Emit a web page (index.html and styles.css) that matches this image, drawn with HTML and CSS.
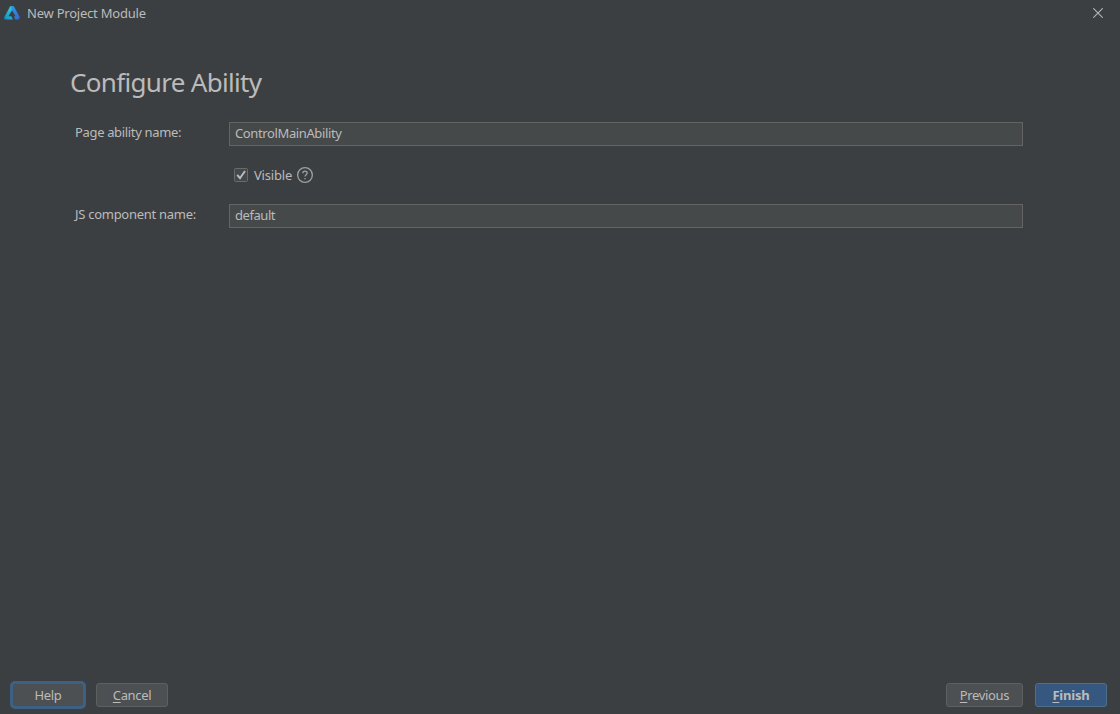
FILE: index.html
```html
<!DOCTYPE html>
<html lang="en">
<head>
<meta charset="utf-8">
<title>New Project Module</title>
<link rel="stylesheet" href="styles.css">
</head>
<body>
<div class="dialog">
  <header class="titlebar">
    <svg class="logo" width="16" height="14" viewBox="0 0 16 14">
      <defs>
        <linearGradient id="left" x1="0" y1="1" x2="1" y2="0"><stop offset="0" stop-color="#0c8dc0"/><stop offset="1" stop-color="#3fd0e4"/></linearGradient>
        <linearGradient id="right" x1="0" y1="0" x2="1" y2="1"><stop offset="0" stop-color="#2b9fe8"/><stop offset="1" stop-color="#3565cf"/></linearGradient>
      </defs>
      <path d="M6 .6Q6.4 0 7 0H8.4L8 4.2L4.4 10.2H7.2L8.8 13.4H1.6Q-.6 13.2.5 10.8Z" fill="url(#left)"/>
      <path d="M7 0H9Q9.6 0 10 .6L15.6 10.8Q16.4 13.2 14 13.4H11.2L10 10.2H11.6L7 2.4Z" fill="url(#right)"/>
    </svg>
    <span class="caption">New Project Module</span>
    <svg class="close" width="10" height="10" viewBox="0 0 10 10"><path d="M.3.3L9.7 9.7M9.7.3L.3 9.7"/></svg>
  </header>
  <main class="content">
    <h1 class="heading">Configure Ability</h1>
    <div class="row">
      <label class="label page" for="page">Page ability name:</label>
      <input class="field" id="page" value="ControlMainAbility">
    </div>
    <div class="visible-row">
      <svg class="check" width="14" height="14" viewBox="0 0 14 14"><rect x=".5" y=".5" width="13" height="13" rx="1"/><path d="M3.2 6.8L6 10.2L11 3"/></svg>
      <span class="visible">Visible</span>
      <svg class="help-icon" width="16" height="16" viewBox="0 0 16 16"><circle cx="8" cy="8" r="7.35"/><path d="M5.8 6.3C5.8 3.4 10.2 3.5 10.2 6.1C10.2 7.7 8 7.7 8 9.6M8 10.9V12.2"/></svg>
    </div>
    <div class="row">
      <label class="label js" for="js">JS component name:</label>
      <input class="field default" id="js" value="default">
    </div>
  </main>
  <footer class="footer">
    <button class="button help">Help</button>
    <button class="button cancel"><span class="key">C</span>ancel</button>
    <span class="spacer"></span>
    <button class="button previous"><span class="key">P</span>revious</button>
    <button class="button finish"><span class="key">F</span>inish</button>
  </footer>
</div>
</body>
</html>
```
FILE: styles.css
```css
* { box-sizing: border-box; }
body {
  margin: 0;
  background: #3c3f41;
  color: #bbb;
  font: 13px/18px "Noto Sans", "Open Sans", sans-serif;
}
.dialog { display: flex; flex-direction: column; height: 714px; }
.titlebar { display: flex; align-items: center; height: 27px; padding: 0 17px 0 4px; }
.logo { margin: 0 7px 1px 0; }
.caption { padding-bottom: 2px; letter-spacing: -.22px; }
.close { margin: 0 0 1px auto; fill: none; stroke: #b4b4b4; stroke-width: 1.1; }
.content { flex: 1; padding: 37px 97px 0 70px; }
.heading { margin: 0 0 22px; font-size: 26px; line-height: 36px; font-weight: 400; letter-spacing: -.68px; }
.row { display: flex; height: 24px; }
.label { width: 159px; padding: 1px 0 0 5px; }
.page { letter-spacing: -.34px; }
.js { letter-spacing: -.28px; }
.field {
  flex: 1;
  min-width: 0;
  height: 24px;
  padding: 0 5px 2px;
  border: 1px solid #646464;
  outline: 0;
  background: #45494a;
  color: #bbb;
  font: inherit;
  letter-spacing: -.38px;
}
.default { letter-spacing: -.45px; }
.visible-row { display: flex; align-items: center; height: 18px; margin: 20px 0; padding-left: 164px; }
.check { margin-right: 6px; }
.check rect { fill: #43494a; stroke: #6b6b6b; }
.check path { fill: none; stroke: #bbb; stroke-width: 2; }
.visible { width: 43px; letter-spacing: -.2px; }
.help-icon { fill: none; stroke: #a0a0a0; stroke-width: 1.3; }
.footer { display: flex; align-items: center; height: 38px; padding: 0 13px 0 10px; }
.button {
  height: 24px;
  padding: 0;
  border: 1px solid #5e6060;
  border-radius: 3px;
  background: #4c5052;
  color: #bbb;
  font: inherit;
  letter-spacing: -.35px;
}
.help { width: 76px; height: 28px; border: 3px solid #3d6185; border-radius: 5px; }
.cancel { width: 72px; margin-left: 10px; }
.spacer { flex: 1; }
.previous { width: 77px; margin-right: 12px; }
.finish { width: 72px; border-color: #4c708c; background: #365880; font-weight: 700; letter-spacing: -.2px; }
.key { text-decoration: underline; text-decoration-thickness: 1px; text-underline-offset: 2px; text-decoration-skip-ink: none; }
```
